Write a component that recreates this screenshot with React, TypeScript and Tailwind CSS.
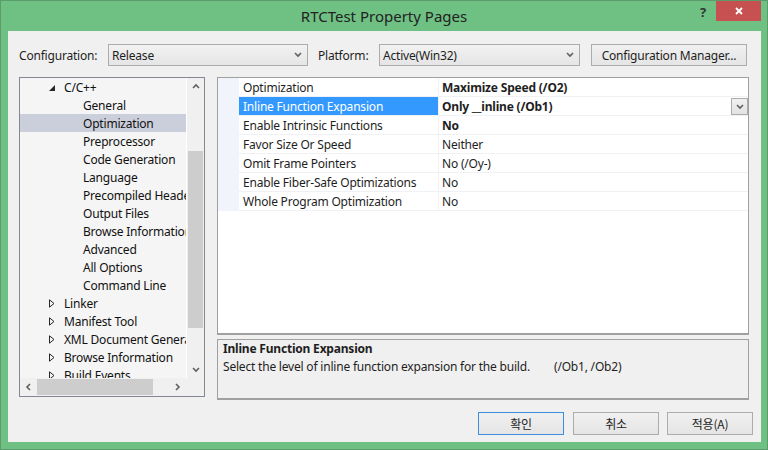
import React from "react";

const Chev = ({ dir }: { dir: "up" | "down" | "left" | "right" }) => {
  const d = {
    down: "M1 2 L4 5 L7 2",
    up: "M1 5 L4 2 L7 5",
    left: "M5 1 L2 4 L5 7",
    right: "M2 1 L5 4 L2 7",
  }[dir];
  return (
    <svg width="8" height="8" viewBox="0 0 8 8" className="block">
      <path d={d} fill="none" stroke="#606060" strokeWidth="1.6" />
    </svg>
  );
};

const treeItems = [
  { label: "C/C++", level: 0, state: "open" },
  { label: "General", level: 1 },
  { label: "Optimization", level: 1, selected: true },
  { label: "Preprocessor", level: 1 },
  { label: "Code Generation", level: 1 },
  { label: "Language", level: 1 },
  { label: "Precompiled Headers", level: 1 },
  { label: "Output Files", level: 1 },
  { label: "Browse Information", level: 1 },
  { label: "Advanced", level: 1 },
  { label: "All Options", level: 1 },
  { label: "Command Line", level: 1 },
  { label: "Linker", level: 0, state: "closed" },
  { label: "Manifest Tool", level: 0, state: "closed" },
  { label: "XML Document Generator", level: 0, state: "closed" },
  { label: "Browse Information", level: 0, state: "closed" },
  { label: "Build Events", level: 0, state: "closed" },
];

const props = [
  { name: "Optimization", value: "Maximize Speed (/O2)", bold: true },
  { name: "Inline Function Expansion", value: "Only __inline (/Ob1)", bold: true, selected: true },
  { name: "Enable Intrinsic Functions", value: "No", bold: true },
  { name: "Favor Size Or Speed", value: "Neither" },
  { name: "Omit Frame Pointers", value: "No (/Oy-)" },
  { name: "Enable Fiber-Safe Optimizations", value: "No" },
  { name: "Whole Program Optimization", value: "No" },
];

const Combo = ({ text, width }: { text: string; width: string }) => (
  <div className={`${width} h-[22px] flex items-center border border-[#acacac] bg-gradient-to-b from-[#f2f2f2] to-[#e5e5e5] pl-[3px] pr-[5px]`}>
    <span className="flex-1 text-[12px] text-[#1e1e1e] pt-[1px]">{text}</span>
    <Chev dir="down" />
  </div>
);

const KrButton = ({ label, focused }: { label: string; focused?: boolean }) => (
  <div
    className={`w-[86px] h-[23px] flex items-center justify-center border bg-gradient-to-b from-[#f0f0f0] to-[#e5e5e5] text-[12px] text-[#1e1e1e] font-['Noto_Sans_CJK_KR',sans-serif] ${
      focused ? "border-[#3c8ddc]" : "border-[#acacac]"
    }`}
  >
    {label}
  </div>
);

export default function App() {
  return (
    <div className="w-[768px] h-[450px] bg-[#6fc083] border border-[#5c9c6c] flex flex-col font-['Noto_Sans',sans-serif] text-[12px] tracking-[-0.2px] text-[#1e1e1e] overflow-hidden">
      {/* title bar */}
      <div className="h-[30px] relative flex items-center justify-center">
        <span className="text-[15px] text-[#222] tracking-normal">RTCTest Property Pages</span>
        <span className="absolute right-[61px] top-[2px] text-[13px] font-bold text-[#333]">?</span>
        <div className="absolute right-[6px] top-0 w-[45px] h-[20px] bg-[#c75050] flex items-center justify-center">
          <svg width="10" height="10" viewBox="0 0 10 10">
            <path d="M2 2 L8 8 M8 2 L2 8" stroke="#fff" strokeWidth="1.8" />
          </svg>
        </div>
      </div>

      {/* client */}
      <div className="flex-1 ml-[7px] mr-[6px] mb-[7px] bg-[#f0f0f0] flex flex-col">
        {/* configuration row */}
        <div className="mt-[13px] pl-[11px] pr-[12px] flex items-center h-[22px]">
          <span className="w-[89px] pt-[1px]">Configuration:</span>
          <Combo text="Release" width="w-[200px]" />
          <span className="ml-[10px] w-[61px] pt-[1px]">Platform:</span>
          <Combo text="Active(Win32)" width="w-[201px]" />
          <div className="ml-[11px] w-[156px] h-[22px] pt-[1px] flex items-center justify-center border border-[#acacac] bg-gradient-to-b from-[#f0f0f0] to-[#e5e5e5]">
            Configuration Manager...
          </div>
        </div>

        {/* main row */}
        <div className="mt-[11px] pl-[11px] pr-[12px] flex gap-[12px]">
          {/* tree */}
          <div className="w-[186px] h-[320px] border border-[#828790] flex flex-col">
            <div className="flex h-[300px]">
              <div className="w-[166px] bg-[#f5f5f5] overflow-hidden">
                {treeItems.map((it, i) => (
                  <div
                    key={i}
                    className={`h-[18px] pt-[1px] flex items-center whitespace-nowrap text-[#111] ${it.selected ? "bg-[#cbcedb]" : ""}`}
                  >
                    {it.level === 0 ? (
                      <>
                        <span className="w-[29px] shrink-0" />
                        <span className="w-[15px] shrink-0 flex items-center">
                          {it.state === "open" ? (
                            <svg width="6" height="6" viewBox="0 0 6 6">
                              <polygon points="0,6 6,6 6,0" fill="#262626" />
                            </svg>
                          ) : (
                            <svg width="6" height="9" viewBox="0 0 6 9">
                              <polygon points="0.5,0.8 5,4.5 0.5,8.2" fill="none" stroke="#262626" strokeWidth="1" />
                            </svg>
                          )}
                        </span>
                        <span>{it.label}</span>
                      </>
                    ) : (
                      <span className="pl-[63px]">{it.label}</span>
                    )}
                  </div>
                ))}
              </div>
              <div className="w-[18px] border-l border-white bg-[#f0f0f0] flex flex-col items-center">
                <div className="h-[17px] flex items-center justify-center">
                  <Chev dir="up" />
                </div>
                <div className="mt-[56px] w-[15px] h-[177px] bg-[#cdcdcd]" />
                <div className="mt-auto h-[17px] flex items-center justify-center">
                  <Chev dir="down" />
                </div>
              </div>
            </div>
            <div className="h-[18px] bg-[#f0f0f0] flex items-center">
              <div className="w-[17px] flex justify-center">
                <Chev dir="left" />
              </div>
              <div className="w-[116px] h-[16px] bg-[#cdcdcd]" />
              <div className="ml-[16px] w-[17px] flex justify-center">
                <Chev dir="right" />
              </div>
            </div>
          </div>

          {/* right column */}
          <div className="flex-1 flex flex-col gap-[4px]">
            <div className="h-[258px] border border-[#a0a0a0] border-b-2 bg-white">
              {props.map((p, i) => (
                <div key={i} className="h-[19px] flex">
                  <div className="w-[21px] bg-[#f1f4fa]" />
                  <div
                    className={`w-[200px] border-b border-r border-[#eff1f5] pl-[4px] pt-[1px] flex items-center whitespace-nowrap ${
                      p.selected ? "bg-[#3399ff] text-white" : ""
                    }`}
                  >
                    {p.name}
                  </div>
                  <div className={`flex-1 relative border-b border-[#eff1f5] pl-[3px] pt-[1px] flex items-center ${p.bold ? "font-bold" : ""}`}>
                    {p.value}
                    {p.selected && (
                      <div className="absolute right-0 top-[1px] w-[17px] h-[17px] border border-[#acacac] bg-gradient-to-b from-[#f0f0f0] to-[#e3e3e3] flex items-center justify-center">
                        <Chev dir="down" />
                      </div>
                    )}
                  </div>
                </div>
              ))}
            </div>
            <div className="h-[61px] border border-[#a0a0a0] border-b-2 bg-[#f0f0f0] px-[5px]">
              <div className="font-bold leading-[18px]">Inline Function Expansion</div>
              <div className="leading-[18px] flex">
                <span className="w-[331px]">Select the level of inline function expansion for the build.</span>
                <span>(/Ob1, /Ob2)</span>
              </div>
            </div>
          </div>
        </div>

        {/* buttons */}
        <div className="mt-[12px] pr-[8px] flex justify-end">
          <KrButton label="확인" focused />
          <div className="w-[9px]" />
          <KrButton label="취소" />
          <div className="w-[8px]" />
          <KrButton label="적용(A)" />
        </div>
      </div>
    </div>
  );
}
